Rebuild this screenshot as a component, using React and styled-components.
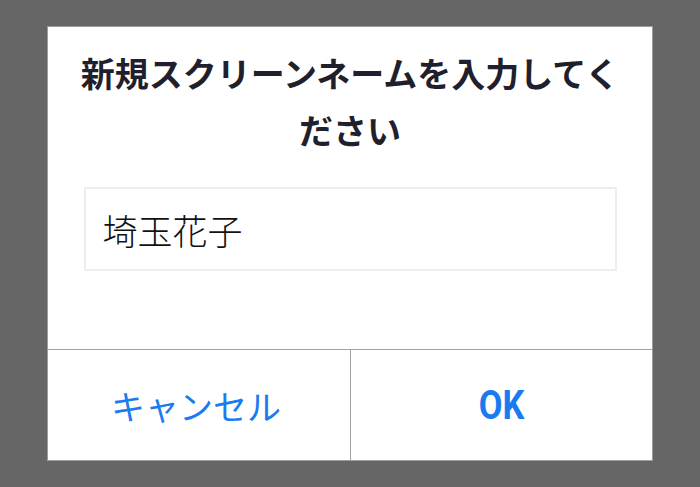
import React, { useState } from 'react';
import styled, { createGlobalStyle } from 'styled-components';

const GlobalStyle = createGlobalStyle`
  html, body {
    margin: 0;
    padding: 0;
    background: #666666;
  }
  #root {
    min-height: 100vh;
    display: flex;
    align-items: center;
    justify-content: center;
  }
`;

const Dialog = styled.div`
  width: 606px;
  height: 435px;
  box-sizing: border-box;
  background: #ffffff;
  border: 1px solid #9c9c9c;
  display: flex;
  flex-direction: column;
  font-family: "Noto Sans CJK JP", "Noto Sans", sans-serif;
`;

const Body = styled.div`
  flex: 1;
  padding: 17px 16px 0;
  display: flex;
  flex-direction: column;
  align-items: center;
`;

const Title = styled.h2`
  margin: 0;
  max-width: 556px;
  font-size: 34px;
  line-height: 57px;
  font-weight: 700;
  color: #1f1f2d;
  text-align: center;
`;

const NameInput = styled.input`
  margin-top: 29px;
  width: 533px;
  height: 84px;
  box-sizing: border-box;
  border: 2px solid #ececf1;
  padding: 0 17px;
  font-family: inherit;
  font-size: 35px;
  font-weight: 300;
  color: #111111;
  outline: none;
  background: #ffffff;
`;

const Actions = styled.div`
  height: 110px;
  display: grid;
  grid-template-columns: 1fr 1fr;
  border-top: 1px solid #a3a3a3;
`;

const ActionButton = styled.button`
  border: none;
  background: transparent;
  border-left: ${(p) => (p.$divider ? '1px solid #a3a3a3' : 'none')};
  color: #1a7bf0;
  font-family: ${(p) => (p.$primary ? 'Roboto, "Noto Sans CJK JP", sans-serif' : 'inherit')};
  font-size: ${(p) => (p.$primary ? '40px' : '34px')};
  font-weight: ${(p) => (p.$primary ? 700 : 400)};
  padding: 0 ${(p) => (p.$primary ? '0' : '6px')} 0 0;
  cursor: pointer;
`;

const Condensed = styled.span`
  display: inline-block;
  transform: scaleX(0.86);
`;

export default function App() {
  const [name, setName] = useState('埼玉花子');

  return (
    <>
      <GlobalStyle />
      <Dialog>
        <Body>
          <Title>新規スクリーンネームを入力してください</Title>
          <NameInput value={name} onChange={(e) => setName(e.target.value)} />
        </Body>
        <Actions>
          <ActionButton>キャンセル</ActionButton>
          <ActionButton $divider $primary>
            <Condensed>OK</Condensed>
          </ActionButton>
        </Actions>
      </Dialog>
    </>
  );
}
